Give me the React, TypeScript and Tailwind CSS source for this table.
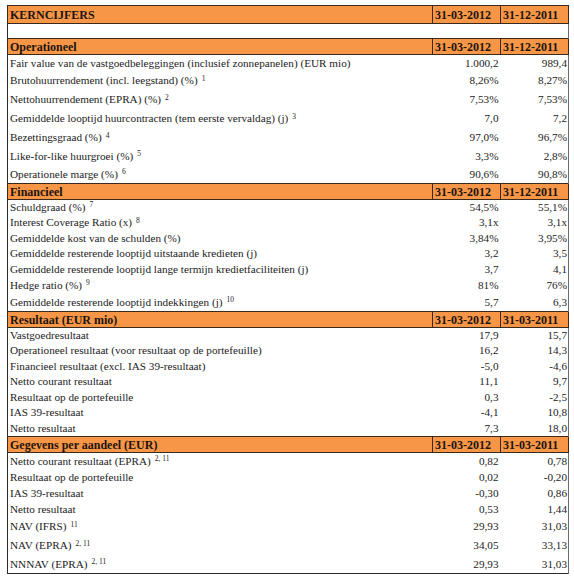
import React from 'react';

type Row = { label: string; sup?: string; a: string; b: string; h: string };
type Section = { title: string; a: string; b: string; rows: Row[] };

const sections: Section[] = [
  {
    title: 'Operationeel',
    a: '31-03-2012',
    b: '31-12-2011',
    rows: [
      { label: 'Fair value van de vastgoedbeleggingen (inclusief zonnepanelen) (EUR mio)', a: '1.000,2', b: '989,4', h: 'h-[17px]' },
      { label: 'Brutohuurrendement (incl. leegstand) (%)', sup: '1', a: '8,26%', b: '8,27%', h: 'h-[19px]' },
      { label: 'Nettohuurrendement (EPRA) (%)', sup: '2', a: '7,53%', b: '7,53%', h: 'h-[19px]' },
      { label: 'Gemiddelde looptijd huurcontracten (tem eerste vervaldag) (j)', sup: '3', a: '7,0', b: '7,2', h: 'h-[19px]' },
      { label: 'Bezettingsgraad (%)', sup: '4', a: '97,0%', b: '96,7%', h: 'h-[19px]' },
      { label: 'Like-for-like huurgroei (%)', sup: '5', a: '3,3%', b: '2,8%', h: 'h-[18px]' },
      { label: 'Operationele marge (%)', sup: '6', a: '90,6%', b: '90,8%', h: 'h-[18px]' },
    ],
  },
  {
    title: 'Financieel',
    a: '31-03-2012',
    b: '31-12-2011',
    rows: [
      { label: 'Schuldgraad (%)', sup: '7', a: '54,5%', b: '55,1%', h: 'h-[16px]' },
      { label: 'Interest Coverage Ratio (x)', sup: '8', a: '3,1x', b: '3,1x', h: 'h-[15px]' },
      { label: 'Gemiddelde kost van de schulden (%)', a: '3,84%', b: '3,95%', h: 'h-[16px]' },
      { label: 'Gemiddelde resterende looptijd uitstaande kredieten (j)', a: '3,2', b: '3,5', h: 'h-[15px]' },
      { label: 'Gemiddelde resterende looptijd lange termijn kredietfaciliteiten (j)', a: '3,7', b: '4,1', h: 'h-[16px]' },
      { label: 'Hedge ratio (%)', sup: '9', a: '81%', b: '76%', h: 'h-[16px]' },
      { label: 'Gemiddelde resterende looptijd indekkingen (j)', sup: '10', a: '5,7', b: '6,3', h: 'h-[18px]' },
    ],
  },
  {
    title: 'Resultaat (EUR mio)',
    a: '31-03-2012',
    b: '31-03-2011',
    rows: [
      { label: 'Vastgoedresultaat', a: '17,9', b: '15,7', h: 'h-[16px]' },
      { label: 'Operationeel resultaat (voor resultaat op de portefeuille)', a: '16,2', b: '14,3', h: 'h-[15px]' },
      { label: 'Financieel resultaat (excl. IAS 39-resultaat)', a: '-5,0', b: '-4,6', h: 'h-[16px]' },
      { label: 'Netto courant resultaat', a: '11,1', b: '9,7', h: 'h-[15px]' },
      { label: 'Resultaat op de portefeuille', a: '0,3', b: '-2,5', h: 'h-[16px]' },
      { label: 'IAS 39-resultaat', a: '-4,1', b: '10,8', h: 'h-[15px]' },
      { label: 'Netto resultaat', a: '7,3', b: '18,0', h: 'h-[16px]' },
    ],
  },
  {
    title: 'Gegevens per aandeel (EUR)',
    a: '31-03-2012',
    b: '31-03-2011',
    rows: [
      { label: 'Netto courant resultaat (EPRA)', sup: '2, 11', a: '0,82', b: '0,78', h: 'h-[18px]' },
      { label: 'Resultaat op de portefeuille', a: '0,02', b: '-0,20', h: 'h-[15px]' },
      { label: 'IAS 39-resultaat', a: '-0,30', b: '0,86', h: 'h-[16px]' },
      { label: 'Netto resultaat', a: '0,53', b: '1,44', h: 'h-[16px]' },
      { label: 'NAV (IFRS)', sup: '11', a: '29,93', b: '31,03', h: 'h-[19px]' },
      { label: 'NAV (EPRA)', sup: '2, 11', a: '34,05', b: '33,13', h: 'h-[19px]' },
      { label: 'NNNAV (EPRA)', sup: '2, 11', a: '29,93', b: '31,03', h: 'h-[18px]' },
    ],
  },
];

const HeaderRow: React.FC<{ title: string; a: string; b: string; h: string }> = ({ title, a, b, h }) => (
  <tr className={`${h} bg-[#f79646] text-[12px] font-bold text-[#1c140e]`}>
    <td className="border border-[#3b2a1c] pl-[2px] align-middle">{title}</td>
    <td className="border border-[#3b2a1c] pl-[2px] align-middle">{a}</td>
    <td className="border border-[#3b2a1c] pl-[2px] align-middle">{b}</td>
  </tr>
);

const App: React.FC = () => {
  return (
    <div className="min-h-[579px] w-[574px] bg-white pl-[7px] pt-[5px]">
      <table className="w-[561px] table-fixed border-collapse font-['Liberation_Serif',serif] text-[11.2px] leading-none text-[#1c1c1c]">
        <colgroup>
          <col className="w-[425px]" />
          <col className="w-[68px]" />
          <col className="w-[68px]" />
        </colgroup>
        <tbody>
          <HeaderRow title="KERNCIJFERS" a="31-03-2012" b="31-12-2011" h="h-[18px]" />
          {/* lege rij */}
          <tr className="h-[15px]">
            <td className="border-l border-[#2a2a2a]"></td>
            <td></td>
            <td className="border-r border-[#6b6b6b]"></td>
          </tr>
          {sections.map((s) => (
            <React.Fragment key={s.title}>
              <HeaderRow title={s.title} a={s.a} b={s.b} h="h-[16px]" />
              {s.rows.map((r) => (
                <tr key={r.label} className={r.h}>
                  <td className="whitespace-nowrap border-l border-[#2a2a2a] pl-[2px] align-middle">
                    {r.label}
                    {r.sup && <sup className="ml-[4px] text-[7.5px]">{r.sup}</sup>}
                  </td>
                  <td className="pr-[2px] text-right align-middle">{r.a}</td>
                  <td className="border-r border-[#6b6b6b] pr-[1px] text-right align-middle">{r.b}</td>
                </tr>
              ))}
            </React.Fragment>
          ))}
          <tr className="h-0">
            <td colSpan={3} className="border-t border-[#2a2a2a] p-0"></td>
          </tr>
        </tbody>
      </table>
    </div>
  );
};

export default App;
